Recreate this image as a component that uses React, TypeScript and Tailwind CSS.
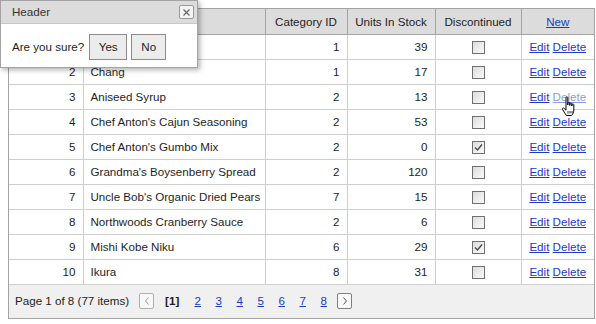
import React from 'react';

type Product = { id: number; name: string; category: number; units: number; discontinued: boolean };

const PRODUCTS: Product[] = [
  { id: 1, name: 'Chai', category: 1, units: 39, discontinued: false },
  { id: 2, name: 'Chang', category: 1, units: 17, discontinued: false },
  { id: 3, name: 'Aniseed Syrup', category: 2, units: 13, discontinued: false },
  { id: 4, name: "Chef Anton's Cajun Seasoning", category: 2, units: 53, discontinued: false },
  { id: 5, name: "Chef Anton's Gumbo Mix", category: 2, units: 0, discontinued: true },
  { id: 6, name: "Grandma's Boysenberry Spread", category: 2, units: 120, discontinued: false },
  { id: 7, name: "Uncle Bob's Organic Dried Pears", category: 7, units: 15, discontinued: false },
  { id: 8, name: 'Northwoods Cranberry Sauce', category: 2, units: 6, discontinued: false },
  { id: 9, name: 'Mishi Kobe Niku', category: 6, units: 29, discontinued: true },
  { id: 10, name: 'Ikura', category: 8, units: 31, discontinued: false },
];

function CheckBox({ checked }: { checked: boolean }) {
  return (
    <span className="inline-flex h-[13px] w-[13px] items-center justify-center border border-[#707070] bg-gradient-to-br from-[#dcdcdc] to-[#fbfbfb] align-middle">
      {checked && (
        <svg width="9" height="9" viewBox="0 0 9 9">
          <path d="M1 4.5 L3.5 7 L8 1.5" fill="none" stroke="#4a4a4a" strokeWidth="1.4" />
        </svg>
      )}
    </span>
  );
}

function HandCursor() {
  return (
    <svg width="18" height="22" viewBox="0 0 18 22" className="pointer-events-none absolute left-[561px] top-[96px]">
      <path
        d="M5 1.5 C5 0.7 6.8 0.7 6.8 1.5 L6.8 9 L7 6.8 C7 6 8.8 6 8.8 6.8 L8.8 9.5 L9 7.6 C9 6.8 10.8 6.8 10.8 7.6 L10.8 10 L11 8.6 C11 7.8 12.8 7.8 12.8 8.6 L12.8 14 C12.8 16.5 11.5 18.5 10.5 19.5 L5.5 19.5 C4.5 18 2.8 16 1.6 13.6 C1 12.4 2.2 11.4 3.2 12.4 L5 14.2 Z"
        fill="#fff"
        stroke="#000"
        strokeWidth="1"
        strokeLinejoin="round"
      />
      <path d="M7 15 L7 17.5 M9 15 L9 17.5 M11 15 L11 17.5" stroke="#000" strokeWidth="0.8" />
    </svg>
  );
}

function App() {
  const font = { fontFamily: '"Liberation Sans", Arial, sans-serif' };
  const link = 'text-[#1b3bc4] underline';

  return (
    <div className="relative h-[324px] w-[596px] bg-white text-[11.6px] text-[#1e1e1e]" style={font}>
      <div className="pl-[8px] pt-[8px]">
        <div className="w-[587px] border border-[#a3a3a3]">
          <table className="w-full table-fixed border-collapse">
            <colgroup>
              <col className="w-[74px]" />
              <col className="w-[182px]" />
              <col className="w-[82px]" />
              <col className="w-[88px]" />
              <col className="w-[86px]" />
              <col />
            </colgroup>
            <thead>
              <tr className="h-[25px] bg-[#dcdcdc]">
                <th className="border-b border-r border-[#a3a3a3] font-normal"></th>
                <th className="border-b border-r border-[#a3a3a3] font-normal"></th>
                <th className="border-b border-r border-[#a3a3a3] text-center font-normal">Category ID</th>
                <th className="border-b border-r border-[#a3a3a3] text-center font-normal">Units In Stock</th>
                <th className="border-b border-r border-[#a3a3a3] text-center font-normal">Discontinued</th>
                <th className="border-b border-[#a3a3a3] text-center font-normal">
                  <span className={link}>New</span>
                </th>
              </tr>
            </thead>
            <tbody>
              {PRODUCTS.map((p) => (
                <tr key={p.id} className="h-[25px]">
                  <td className="border-b border-r border-[#cfcfcf] pr-[7px] text-right">{p.id}</td>
                  <td className="overflow-hidden border-b border-r border-[#cfcfcf] pl-[7px] whitespace-nowrap">{p.name}</td>
                  <td className="border-b border-r border-[#cfcfcf] pr-[7px] text-right">{p.category}</td>
                  <td className="border-b border-r border-[#cfcfcf] pr-[7px] text-right">{p.units}</td>
                  <td className="border-b border-r border-[#cfcfcf] text-center">
                    <CheckBox checked={p.discontinued} />
                  </td>
                  <td className="border-b border-[#cfcfcf] text-center whitespace-nowrap">
                    <span className={link}>Edit</span>{' '}
                    <span className={p.id === 3 ? 'text-[#8a9de6] underline' : link}>Delete</span>
                  </td>
                </tr>
              ))}
            </tbody>
          </table>
          <div className="flex h-[33px] items-center gap-[6px] bg-[#f0f0f0] pl-[6px]">
            <span>Page 1 of 8 (77 items)</span>
            <span className="ml-[4px] flex h-[16px] w-[15px] items-center justify-center rounded-[2px] border border-[#b0b0b0] bg-[#f8f8f8]">
              <svg width="6" height="8" viewBox="0 0 6 8">
                <path d="M4.5 0.5 L1.5 4 L4.5 7.5" fill="none" stroke="#9a9a9a" strokeWidth="1" />
              </svg>
            </span>
            <span className="ml-[5px] mr-[5px] font-bold">[1]</span>
            {[2, 3, 4, 5, 6, 7, 8].map((n) => (
              <span key={n} className={`${link} w-[15px] text-center`}>
                {n}
              </span>
            ))}
            <span className="flex h-[16px] w-[15px] items-center justify-center rounded-[2px] border border-[#808080] bg-[#f8f8f8]">
              <svg width="6" height="8" viewBox="0 0 6 8">
                <path d="M1.5 0.5 L4.5 4 L1.5 7.5" fill="none" stroke="#555" strokeWidth="1" />
              </svg>
            </span>
          </div>
        </div>
      </div>

      <div className="absolute left-0 top-0 w-[198px] border border-[#a3a3a3] bg-white shadow-[2px_2px_5px_rgba(0,0,0,0.3)]">
        <div className="flex h-[23px] items-center justify-between border-b border-[#c8c8c8] bg-[#dcdcdc] pl-[11px] pr-[3px]">
          <span className="text-[#333]">Header</span>
          <span className="flex h-[14px] w-[15px] items-center justify-center rounded-[2px] border border-[#999] bg-[#f4f4f4]">
            <svg width="7" height="7" viewBox="0 0 7 7">
              <path d="M0.5 0.5 L6.5 6.5 M6.5 0.5 L0.5 6.5" stroke="#666" strokeWidth="1.2" />
            </svg>
          </span>
        </div>
        <div className="flex items-center gap-[4px] pb-[7px] pl-[11px] pt-[10px]">
          <span className="mr-[1px]">Are you sure?</span>
          <span className="flex h-[26px] w-[38px] items-center justify-center border border-[#8c8c8c] bg-[#ececec]">Yes</span>
          <span className="flex h-[26px] w-[35px] items-center justify-center border border-[#8c8c8c] bg-[#ececec]">No</span>
        </div>
      </div>

      <HandCursor />
    </div>
  );
}

export default App;
